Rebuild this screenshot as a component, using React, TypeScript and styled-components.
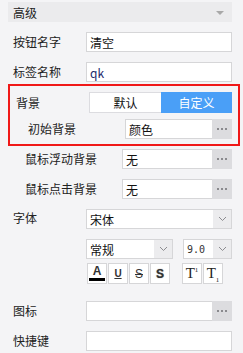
import React from 'react';
import styled, { createGlobalStyle } from 'styled-components';

const GlobalStyle = createGlobalStyle`
	html, body {
		margin: 0;
		padding: 0;
		background: #f4f4f6;
	}
	body {
		font-family: "Noto Sans CJK SC", "Noto Sans", sans-serif;
		font-size: 12px;
		color: #222;
	}
`;

const Panel = styled.div`
	width: 224px;
	padding: 2px 11px 2px 8px;
	display: flex;
	flex-direction: column;
`;

const Header = styled.div`
	height: 20px;
	background: #ebebed;
	display: flex;
	align-items: center;
	justify-content: space-between;
	padding: 0 8px 0 5px;
	margin-bottom: 10px;
	font-size: 12px;
	color: #222;
`;

const Caret = styled.span`
	width: 0;
	height: 0;
	border-left: 4px solid transparent;
	border-right: 4px solid transparent;
	border-top: 4px solid #a8a8a8;
	margin-top: 2px;
`;

const Row = styled.div<{ $gap?: number; $top?: boolean; $indent?: boolean }>`
	display: flex;
	align-items: ${(p) => (p.$top ? 'flex-start' : 'center')};
	margin-top: ${(p) => p.$gap ?? 0}px;
	padding-left: ${(p) => (p.$indent ? 0 : 0)}px;
`;

const Label = styled.div<{ $width?: number; $pad?: number; $top?: boolean }>`
	width: ${(p) => p.$width ?? 78}px;
	flex: none;
	box-sizing: border-box;
	padding-left: ${(p) => p.$pad ?? 5}px;
	padding-top: ${(p) => (p.$top ? 1 : 0)}px;
	line-height: 16px;
	white-space: nowrap;
`;

const Field = styled.div<{ $width?: number }>`
	flex: ${(p) => (p.$width ? 'none' : 1)};
	width: ${(p) => (p.$width ? `${p.$width}px` : 'auto')};
	height: 20px;
	box-sizing: border-box;
	background: #fff;
	border: 1px solid #d6d6d8;
	display: flex;
	align-items: stretch;
`;

const FieldText = styled.div<{ $mono?: boolean }>`
	flex: 1;
	display: flex;
	align-items: center;
	padding-left: 3px;
	font-family: ${(p) => (p.$mono ? '"DejaVu Sans Mono", monospace' : 'inherit')};
	font-size: ${(p) => (p.$mono ? '10px' : '12px')};
	color: ${(p) => (p.$mono ? '#333' : '#111')};
`;

const DotsButton = styled.div`
	width: 20px;
	flex: none;
	background: #dcdcdf;
	margin: -1px -1px -1px 0;
	display: flex;
	align-items: center;
	justify-content: center;
	gap: 2px;
	span {
		width: 2px;
		height: 2px;
		background: #8a8a8e;
	}
`;

const ArrowBox = styled.div`
	width: 18px;
	flex: none;
	background: #ececee;
	display: flex;
	align-items: center;
	justify-content: center;
`;

const Highlight = styled.div`
	margin: 2px -8px 0 0;
	border: 2px solid #f01818;
	padding: 6px 6px 5px 3px;
	display: flex;
	flex-direction: column;
`;

const Toggle = styled.div`
	flex: 1;
	height: 21px;
	display: flex;
	box-sizing: border-box;
	border: 1px solid #dcdce0;
	background: #fff;
`;

const ToggleOption = styled.div<{ $active?: boolean }>`
	flex: 1;
	display: flex;
	align-items: center;
	justify-content: center;
	background: ${(p) => (p.$active ? '#4a9ff7' : '#fff')};
	color: ${(p) => (p.$active ? '#fff' : '#111')};
	margin: ${(p) => (p.$active ? '-1px -1px -1px 0' : '0')};
`;

const SelectPair = styled.div`
	flex: 1;
	display: flex;
	justify-content: space-between;
`;

const StyleBar = styled.div`
	display: flex;
	margin: 4px 0 0 79px;
	gap: 1px;
`;

const StyleButton = styled.div<{ $space?: number }>`
	width: 20px;
	height: 21px;
	box-sizing: border-box;
	border: 1px solid #d6d6d8;
	background: #fff;
	margin-left: ${(p) => p.$space ?? 0}px;
	display: flex;
	flex-direction: column;
	align-items: center;
	justify-content: center;
	position: relative;
	font-family: "Liberation Sans", sans-serif;
	font-weight: bold;
	font-size: 12px;
	color: #333;
`;

const SerifGlyph = styled.span`
	font-family: "Liberation Serif", serif;
	font-weight: normal;
	font-size: 15px;
	color: #222;
	line-height: 1;
	sup, sub {
		font-size: 7px;
		line-height: 0;
	}
`;

const ColorBar = styled.span`
	width: 16px;
	height: 3px;
	background: #000;
	margin-top: 1px;
`;

const Chevron = () => (
	<svg width="9" height="6" viewBox="0 0 9 6">
		<path d="M1 1 L4.5 4.5 L8 1" fill="none" stroke="#8c8c90" strokeWidth="1" />
	</svg>
);

const Dots = () => (
	<DotsButton>
		<span />
		<span />
		<span />
	</DotsButton>
);

const App: React.FC = () => {
	return (
		<>
			<GlobalStyle />
			<Panel>
				<Header>
					<span>高级</span>
					<Caret />
				</Header>
				<Row>
					<Label>按钮名字</Label>
					<Field><FieldText>清空</FieldText></Field>
				</Row>
				<Row $gap={10}>
					<Label>标签名称</Label>
					<Field><FieldText style={{ color: '#1a2a6a' }}>qk</FieldText></Field>
				</Row>
				<Highlight>
					<Row>
						<Label $width={76} $pad={3}>背景</Label>
						<Toggle>
							<ToggleOption>默认</ToggleOption>
							<ToggleOption $active>自定义</ToggleOption>
						</Toggle>
					</Row>
					<Row $gap={6}>
						<Label $width={112} $pad={15}>初始背景</Label>
						<Field><FieldText>颜色</FieldText><Dots /></Field>
					</Row>
				</Highlight>
				<Row $gap={3}>
					<Label $width={114} $pad={17}>鼠标浮动背景</Label>
					<Field><FieldText>无</FieldText><Dots /></Field>
				</Row>
				<Row $gap={10}>
					<Label $width={114} $pad={17}>鼠标点击背景</Label>
					<Field><FieldText>无</FieldText><Dots /></Field>
				</Row>
				<Row $gap={10} $top>
					<Label $top>字体</Label>
					<Field><FieldText>宋体</FieldText><ArrowBox><Chevron /></ArrowBox></Field>
				</Row>
				<Row $gap={10}>
					<Label />
					<SelectPair>
						<Field $width={87}><FieldText>常规</FieldText><ArrowBox><Chevron /></ArrowBox></Field>
						<Field $width={49}><FieldText $mono>9.0</FieldText><ArrowBox><Chevron /></ArrowBox></Field>
					</SelectPair>
				</Row>
				<StyleBar>
					<StyleButton>
						<span style={{ lineHeight: '11px', fontSize: '12px' }}>A</span>
						<ColorBar />
					</StyleButton>
					<StyleButton><span style={{ textDecoration: 'underline', fontSize: '10px' }}>U</span></StyleButton>
					<StyleButton><span style={{ textDecoration: 'line-through', fontWeight: 'normal' }}>S</span></StyleButton>
					<StyleButton><span style={{ textShadow: '0 0 1px #666' }}>S</span></StyleButton>
					<StyleButton $space={11}><SerifGlyph>T<sup>1</sup></SerifGlyph></StyleButton>
					<StyleButton><SerifGlyph>T<sub>1</sub></SerifGlyph></StyleButton>
				</StyleBar>
				<Row $gap={17}>
					<Label>图标</Label>
					<Field><FieldText /><Dots /></Field>
				</Row>
				<Row $gap={10}>
					<Label>快捷键</Label>
					<Field><FieldText /></Field>
				</Row>
			</Panel>
		</>
	);
};

export default App;
